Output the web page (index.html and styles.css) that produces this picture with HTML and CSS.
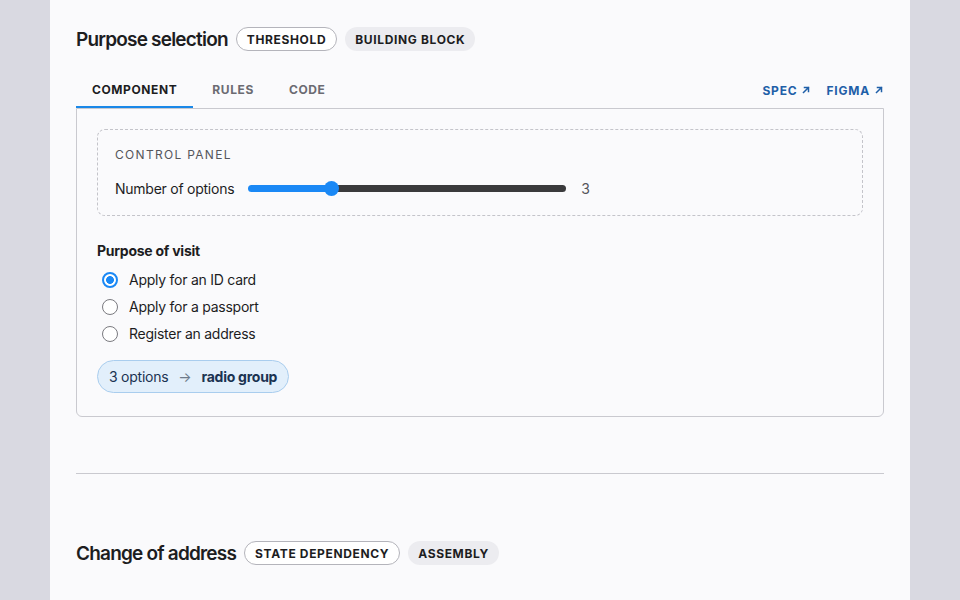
FILE: index.html
```html
<!DOCTYPE html>
<html lang="en">
<head>
<meta charset="utf-8">
<title>Purpose selection</title>
<link rel="stylesheet" href="styles.css">
</head>
<body>
<main class="page">
  <section class="block">
    <header class="block-head">
      <h2 class="block-title">Purpose selection</h2>
      <span class="badge badge-outline">THRESHOLD</span>
      <span class="badge badge-fill">BUILDING BLOCK</span>
    </header>

    <nav class="tabs">
      <a class="tab tab-active">COMPONENT</a>
      <a class="tab">RULES</a>
      <a class="tab">CODE</a>
      <span class="tabs-spacer"></span>
      <a class="ext-link">SPEC <svg class="ext-icon" viewBox="0 0 10 10"><path d="M2.5 7.5 L7.5 2.5 M3.5 2.5 H7.5 V6.5" fill="none" stroke="currentColor" stroke-width="1.5" stroke-linecap="square"/></svg></a>
      <a class="ext-link">FIGMA <svg class="ext-icon" viewBox="0 0 10 10"><path d="M2.5 7.5 L7.5 2.5 M3.5 2.5 H7.5 V6.5" fill="none" stroke="currentColor" stroke-width="1.5" stroke-linecap="square"/></svg></a>
    </nav>

    <div class="panel">
      <div class="controls">
        <div class="controls-label">CONTROL PANEL</div>
        <div class="control-row">
          <span class="control-name">Number of options</span>
          <input class="slider" type="range" min="2" max="6" value="3">
          <span class="control-value">3</span>
        </div>
      </div>

      <fieldset class="radio-group">
        <legend class="radio-legend">Purpose of visit</legend>
        <label class="radio-item"><input type="radio" name="purpose" checked><span>Apply for an ID card</span></label>
        <label class="radio-item"><input type="radio" name="purpose"><span>Apply for a passport</span></label>
        <label class="radio-item"><input type="radio" name="purpose"><span>Register an address</span></label>
      </fieldset>

      <div class="result-chip">3 options <span class="chip-arrow">→</span> <strong>radio group</strong></div>
    </div>
  </section>

  <hr class="divider">

  <section class="block">
    <header class="block-head">
      <h2 class="block-title">Change of address</h2>
      <span class="badge badge-outline">STATE DEPENDENCY</span>
      <span class="badge badge-fill">ASSEMBLY</span>
    </header>
  </section>
</main>
</body>
</html>
```

FILE: styles.css
```css
* { box-sizing: border-box; }

html, body {
  margin: 0;
  padding: 0;
  background: #d9d9e1;
  font-family: "Inter", "Liberation Sans", sans-serif;
  color: #1d1d1f;
  letter-spacing: -0.25px;
}

.page {
  width: 860px;
  min-height: 600px;
  margin: 0 auto;
  background: #fafafc;
  padding: 26px 26px 40px;
}

.block-head {
  display: flex;
  align-items: center;
  gap: 8px;
  height: 26px;
}

.block-title {
  margin: 0;
  font-size: 19px;
  font-weight: 600;
  letter-spacing: -0.8px;
}

.badge {
  display: inline-flex;
  align-items: center;
  height: 24px;
  padding: 0 10px;
  border-radius: 12px;
  font-size: 12px;
  font-weight: 700;
  letter-spacing: 0.65px;
  color: #1d1d1f;
}

.badge-outline {
  border: 1px solid #b4b4bb;
  background: #fff;
}

.badge-fill {
  background: #ececf0;
}

.tabs {
  display: flex;
  align-items: stretch;
  margin-top: 20px;
  height: 36px;
}

.tab {
  display: flex;
  align-items: center;
  padding: 0 16px;
  margin-right: 3px;
  font-size: 12px;
  font-weight: 700;
  letter-spacing: 0.6px;
  color: #6b6b72;
  border-bottom: 2px solid transparent;
}

.tab-active {
  color: #1d1d1f;
  border-bottom-color: #1a88e8;
}

.tabs-spacer { flex: 1; }

.ext-link {
  display: flex;
  align-items: center;
  gap: 4px;
  margin-left: 15px;
  font-size: 12px;
  font-weight: 700;
  letter-spacing: 0.8px;
  color: #1f5fa8;
}

.ext-icon {
  width: 10px;
  height: 10px;
}

.panel {
  border: 1px solid #c9c9cf;
  border-radius: 0 0 6px 6px;
  padding: 20px 20px 23px;
}

.controls {
  border: 1px dashed #c4c4ca;
  border-radius: 8px;
  padding: 18px 17px 16px;
}

.controls-label {
  font-size: 12px;
  letter-spacing: 1.3px;
  color: #55555b;
  line-height: 14px;
}

.control-row {
  display: flex;
  align-items: center;
  margin-top: 15px;
  height: 22px;
}

.control-name {
  font-size: 14px;
  color: #1d1d1f;
  margin-right: 14px;
}

.slider {
  -webkit-appearance: none;
  appearance: none;
  width: 318px;
  height: 7px;
  margin: 0;
  border-radius: 4px;
  background: linear-gradient(to right, #1a88f5 0 27%, #3a3a3c 27% 100%);
  outline: none;
}

.slider::-webkit-slider-thumb {
  -webkit-appearance: none;
  appearance: none;
  width: 15px;
  height: 15px;
  border-radius: 50%;
  background: #1a88f5;
  border: none;
}

.control-value {
  margin-left: 15px;
  font-size: 14px;
  color: #55555b;
}

.radio-group {
  border: none;
  margin: 0;
  padding: 0;
  margin-top: 25px;
}

.radio-legend {
  padding: 0;
  font-size: 14px;
  font-weight: 700;
  line-height: 20px;
  margin-bottom: 5px;
}

.radio-item {
  display: flex;
  align-items: center;
  height: 27px;
  font-size: 14px;
  color: #1d1d1f;
}

.radio-item input {
  -webkit-appearance: none;
  appearance: none;
  width: 16px;
  height: 16px;
  margin: 0 11px 0 5px;
  border-radius: 50%;
  border: 1px solid #7a7a80;
  background: #fff;
}

.radio-item input:checked {
  border: 2px solid #1a88f5;
  background: radial-gradient(circle, #1a88f5 0 3.6px, #fff 4.2px);
}

.result-chip {
  display: inline-flex;
  align-items: center;
  gap: 6px;
  margin-top: 13px;
  height: 33px;
  padding: 0 11px;
  border-radius: 17px;
  background: #e2effb;
  border: 1px solid #a9cdee;
  font-size: 14px;
  color: #1b3352;
}

.chip-arrow {
  color: #6d7a8a;
  margin: 0 4px;
}

.result-chip strong {
  font-weight: 700;
}

.divider {
  border: none;
  border-top: 1px solid #c9c9cf;
  margin: 56px 0 66px;
}
```
